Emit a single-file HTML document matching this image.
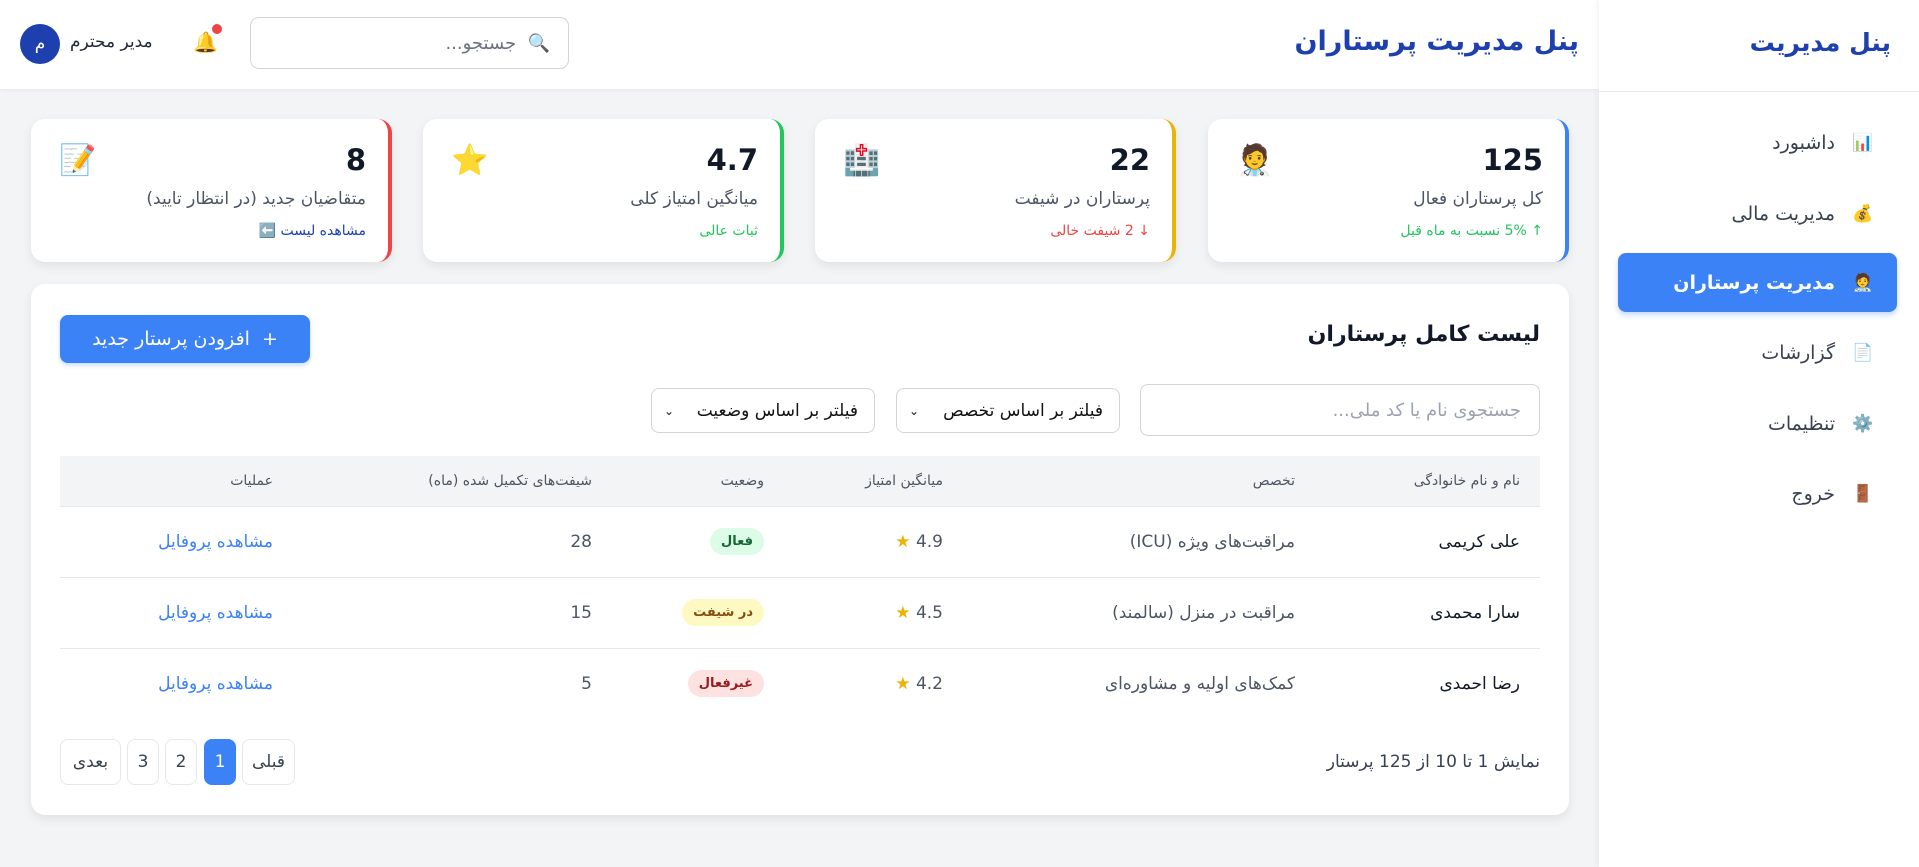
<!DOCTYPE html>
<html lang="fa" dir="rtl"><head><meta charset="utf-8"><style>
*{box-sizing:border-box;margin:0;padding:0}
html,body{width:1919px;height:867px;overflow:hidden}
body{font-family:"DejaVu Sans","Liberation Sans",sans-serif;background:#f3f4f6;color:#1f2937;position:relative}
.side{position:absolute;right:0;top:0;width:320px;height:867px;background:#fff;box-shadow:-2px 0 6px rgba(0,0,0,.05)}
.side h1{position:absolute;right:28px;top:28px;font-size:25px;color:#1e40af;font-weight:bold}
.side .line{position:absolute;top:91px;left:0;right:0;border-top:1px solid #e5e7eb}
.nav{position:absolute;right:22px;width:279px;height:59px;border-radius:8px;display:flex;align-items:center;padding-right:22px;font-size:19px;color:#374151}
.nav .ic{width:24px;margin-left:16px;font-size:17px;text-align:center}
.nav.act{background:#3b82f6;color:#fff;font-weight:bold;box-shadow:0 3px 6px rgba(59,130,246,.3)}
.hdr{position:absolute;left:0;top:0;width:1599px;height:89px;background:#fff;box-shadow:0 1px 4px rgba(0,0,0,.06)}
.hdr h2{position:absolute;right:20px;top:26px;font-size:27px;font-weight:bold;color:#1e40af}
.srch{position:absolute;left:250px;top:17px;width:319px;height:52px;border:1px solid #d1d5db;border-radius:9px;font-size:18px;color:#6b7280;display:flex;align-items:center;padding-right:18px}
.bell{position:absolute;left:193px;top:30px;font-size:20px}
.dot{position:absolute;left:212px;top:24px;width:10px;height:10px;border-radius:50%;background:#ef4444}
.user{position:absolute;left:70px;top:32px;font-size:17px;color:#1f2937}
.av{position:absolute;left:20px;top:24px;width:40px;height:40px;border-radius:50%;background:#1e40af;color:#fff;font-size:17px;display:flex;align-items:center;justify-content:center}
.card{position:absolute;top:119px;width:361px;height:143px;background:#fff;border-radius:14px;box-shadow:0 4px 10px rgba(0,0,0,.08);border-right:4px solid}
.card .n{position:absolute;right:22px;top:24px;font-size:29px;font-weight:bold;color:#111827}
.card .l{position:absolute;right:22px;top:70px;font-size:17px;color:#4b5563}
.card .s{position:absolute;right:22px;top:104px;font-size:14px}
.card .i{position:absolute;left:28px;top:24px;font-size:30px}
.panel{position:absolute;left:31px;top:284px;width:1538px;height:531px;background:#fff;border-radius:14px;box-shadow:0 4px 10px rgba(0,0,0,.08)}
.panel h3{position:absolute;right:29px;top:38px;font-size:22px;font-weight:bold;color:#111827}
.add{position:absolute;left:29px;top:31px;width:250px;height:48px;background:#3b82f6;color:#fff;border-radius:8px;font-size:19px;display:flex;align-items:center;justify-content:center;box-shadow:0 2px 5px rgba(59,130,246,.3)}
.in{position:absolute;right:29px;top:100px;width:400px;height:52px;border:1px solid #d1d5db;border-radius:8px;font-size:18px;color:#9ca3af;display:flex;align-items:center;padding-right:18px}
.sel{position:absolute;top:104px;width:224px;height:45px;border:1px solid #d1d5db;border-radius:8px;font-size:17px;color:#111;display:flex;align-items:center;justify-content:space-between;padding:0 16px 0 12px}
table{position:absolute;left:29px;top:172px;width:1480px;border-collapse:collapse;table-layout:fixed}
th{background:#f3f4f6;height:50px;font-size:14px;color:#4b5563;font-weight:normal;text-align:right;padding:0 20px;border-bottom:1px solid #e5e7eb}
td{height:71px;font-size:17px;color:#4b5563;text-align:right;padding:0 20px;border-bottom:1px solid #e5e7eb}
td:first-child{color:#111827}
tr:last-child td{border-bottom:none}
.b{display:inline-block;font-size:13px;font-weight:bold;padding:6px 11px;border-radius:14px}
.lk{color:#3b82f6}
.star{color:#eab308}
.info{position:absolute;right:29px;top:468px;font-size:17px;color:#374151}
.pg{position:absolute;top:455px;height:46px;border:1px solid #e5e7eb;border-radius:8px;font-size:17px;color:#374151;display:flex;align-items:center;justify-content:center}
</style></head><body>
<div class="hdr">
<h2>پنل مدیریت پرستاران</h2>
<div class="srch">🔍&nbsp; جستجو...</div>
<div class="bell">🔔</div><div class="dot"></div>
<div class="user">مدیر محترم</div>
<div class="av">م</div>
</div>
<div class="side">
<h1>پنل مدیریت</h1><div class="line"></div>
<div class="nav" style="top:113px"><span class="ic">📊</span>داشبورد</div>
<div class="nav" style="top:184px"><span class="ic">💰</span>مدیریت مالی</div>
<div class="nav act" style="top:253px"><span class="ic">🧑‍⚕️</span>مدیریت پرستاران</div>
<div class="nav" style="top:323px"><span class="ic">📄</span>گزارشات</div>
<div class="nav" style="top:394px"><span class="ic">⚙️</span>تنظیمات</div>
<div class="nav" style="top:464px"><span class="ic">🚪</span>خروج</div>
</div>
<div class="card" style="left:1208px;border-color:#3b82f6"><div class="n">125</div><div class="l">کل پرستاران فعال</div><div class="s" style="color:#22c55e">↑ 5% نسبت به ماه قبل</div><div class="i">🧑‍⚕️</div></div>
<div class="card" style="left:815px;border-color:#eab308"><div class="n">22</div><div class="l">پرستاران در شیفت</div><div class="s" style="color:#ef4444">↓ 2 شیفت خالی</div><div class="i">🏥</div></div>
<div class="card" style="left:423px;border-color:#22c55e"><div class="n">4.7</div><div class="l">میانگین امتیاز کلی</div><div class="s" style="color:#22c55e">ثبات عالی</div><div class="i">⭐</div></div>
<div class="card" style="left:31px;border-color:#ef4444"><div class="n">8</div><div class="l">متقاضیان جدید (در انتظار تایید)</div><div class="s" style="color:#1e40af">مشاهده لیست ⬅️</div><div class="i">📝</div></div>
<div class="panel">
<h3>لیست کامل پرستاران</h3>
<div class="add">+&nbsp; افزودن پرستار جدید</div>
<div class="in">جستجوی نام یا کد ملی...</div>
<div class="sel" style="left:865px">فیلتر بر اساس تخصص<span style="font-size:12px">⌄</span></div>
<div class="sel" style="left:620px">فیلتر بر اساس وضعیت<span style="font-size:12px">⌄</span></div>
<table>
<colgroup><col style="width:225px"><col style="width:352px"><col style="width:179px"><col style="width:172px"><col style="width:319px"><col style="width:233px"></colgroup>
<tr><th>نام و نام خانوادگی</th><th>تخصص</th><th>میانگین امتیاز</th><th>وضعیت</th><th>شیفت‌های تکمیل شده (ماه)</th><th>عملیات</th></tr>
<tr><td>علی کریمی</td><td>مراقبت‌های ویژه (ICU)</td><td>4.9 <span class="star">★</span></td><td><span class="b" style="background:#dcfce7;color:#166534">فعال</span></td><td>28</td><td class="lk">مشاهده پروفایل</td></tr>
<tr><td>سارا محمدی</td><td>مراقبت در منزل (سالمند)</td><td>4.5 <span class="star">★</span></td><td><span class="b" style="background:#fef9c3;color:#854d0e">در شیفت</span></td><td>15</td><td class="lk">مشاهده پروفایل</td></tr>
<tr><td>رضا احمدی</td><td>کمک‌های اولیه و مشاوره‌ای</td><td>4.2 <span class="star">★</span></td><td><span class="b" style="background:#fee2e2;color:#991b1b">غیرفعال</span></td><td>5</td><td class="lk">مشاهده پروفایل</td></tr>
</table>
<div class="info">نمایش 1 تا 10 از 125 پرستار</div>
<div class="pg" style="left:211px;width:53px">قبلی</div>
<div class="pg" style="left:173px;width:32px;background:#3b82f6;color:#fff;border-color:#3b82f6">1</div>
<div class="pg" style="left:134px;width:32px">2</div>
<div class="pg" style="left:96px;width:32px">3</div>
<div class="pg" style="left:29px;width:61px">بعدی</div>
</div>
</body></html>
